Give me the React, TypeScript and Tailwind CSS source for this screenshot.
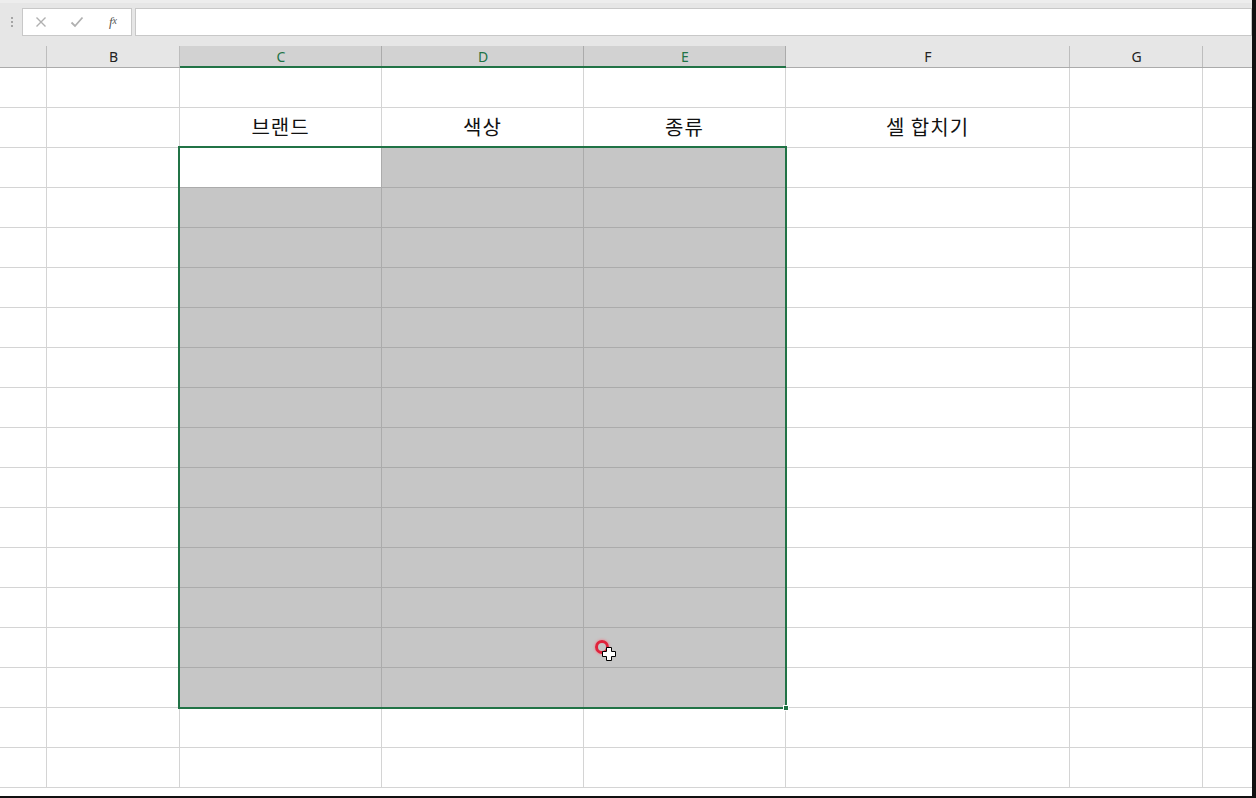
const cols = [
  { key: 'A', label: '', w: 'w-[47px]' },
  { key: 'B', label: 'B', w: 'w-[133px]' },
  { key: 'C', label: 'C', w: 'w-[202px]' },
  { key: 'D', label: 'D', w: 'w-[202px]' },
  { key: 'E', label: 'E', w: 'w-[202px]' },
  { key: 'F', label: 'F', w: 'w-[284px]' },
  { key: 'G', label: 'G', w: 'w-[133px]' },
  { key: 'H', label: '', w: 'flex-1' },
];

const titles: Record<string, string> = { C: '브랜드', D: '색상', E: '종류', F: '셀 합치기' };
const selCols = ['C', 'D', 'E'];

function FormulaBar() {
  return (
    <div className="h-[46px] bg-[#e6e6e6] flex items-start pt-[8px] relative">
      <div className="absolute top-0 left-0 right-0 h-[3px] bg-[#ededed]" />
      <div className="w-[22px] h-[27px] flex flex-col items-center justify-center gap-[2px] pl-[2px]">
        <span className="w-[2px] h-[2px] bg-[#a5a5a5]" />
        <span className="w-[2px] h-[2px] bg-[#a5a5a5]" />
        <span className="w-[2px] h-[2px] bg-[#a5a5a5]" />
      </div>
      <div className="w-[110px] h-[28px] bg-white border border-[#c8c8c8] flex items-center">
        <div className="w-[36px] flex justify-center">
          <svg width="12" height="12" viewBox="0 0 12 12" fill="none" stroke="#b0b0b0" strokeWidth="1.4">
            <path d="M1.5 1.5 L10.5 10.5 M10.5 1.5 L1.5 10.5" />
          </svg>
        </div>
        <div className="w-[36px] flex justify-center">
          <svg width="14" height="12" viewBox="0 0 14 12" fill="none" stroke="#b0b0b0" strokeWidth="1.8">
            <path d="M1.5 6.5 L5 10 L12.5 1.5" />
          </svg>
        </div>
        <div className="w-[36px] flex justify-center text-[13px] italic text-[#555] [font-family:'Liberation_Serif',serif]">
          f<span className="text-[10px] relative top-[1px]">x</span>
        </div>
      </div>
      <div className="ml-[3px] flex-1 h-[28px] bg-white border border-[#c8c8c8]" />
    </div>
  );
}

function HeaderRow() {
  return (
    <div className="flex h-[22px] bg-[#e6e6e6] border-b border-[#ababab] text-[14px] [font-family:'Noto_Sans',sans-serif]">
      {cols.map((c) => {
        const sel = selCols.includes(c.key);
        return (
          <div
            key={c.key}
            className={`${c.w} h-full flex items-center justify-center relative ${
              sel ? 'bg-[#d2d2d2] text-[#217346]' : 'text-[#222]'
            }`}
          >
            {c.label}
            {c.key !== 'H' && (
              <span className={`absolute right-0 top-0 bottom-0 w-px ${sel ? 'bg-[#ababab]' : 'bg-[#bdbdbd]'}`} />
            )}
            {sel && <span className="absolute left-0 right-0 -bottom-px h-[2px] bg-[#217346]" />}
          </div>
        );
      })}
    </div>
  );
}

function GridRow({ r }: { r: number }) {
  return (
    <div className="flex h-[40px]">
      {cols.map((c) => {
        const inSel = selCols.includes(c.key) && r >= 2 && r <= 15;
        const active = c.key === 'C' && r === 2;
        const gray = inSel && !active;
        return (
          <div
            key={c.key}
            className={`${c.w} h-full flex items-center justify-center border-b ${
              c.key !== 'H' ? 'border-r' : ''
            } ${gray ? 'bg-[#c6c6c6]' : 'bg-white'} ${
              inSel ? 'border-[#ababab]' : 'border-[#d4d4d4]'
            } text-[20px] text-[#111] tracking-[1px] [font-family:'Noto_Sans_CJK_KR','Noto_Sans',sans-serif]`}
          >
            {r === 1 && titles[c.key] ? <span className="relative top-[-1px]">{titles[c.key]}</span> : null}
          </div>
        );
      })}
    </div>
  );
}

export default function App() {
  const rows = Array.from({ length: 18 }, (_, i) => i);
  return (
    <div className="w-[1256px] h-[798px] overflow-hidden bg-white relative">
      <div className="mr-[4px] h-[796px] overflow-hidden relative">
        <FormulaBar />
        <HeaderRow />
        <div className="flex flex-col">
          {rows.map((r) => (
            <GridRow key={r} r={r} />
          ))}
        </div>
        {/* selection border */}
        <div className="absolute left-[178px] top-[146px] w-[609px] h-[563px] border-2 border-[#217346] pointer-events-none" />
        <div className="absolute left-[783px] top-[705px] w-[6px] h-[6px] bg-[#217346] border border-white" />
        {/* click indicator + cursor */}
        <div className="absolute left-[595px] top-[640px] w-[14px] h-[14px] rounded-full border-[3px] border-[#e0233c] shadow-[0_0_3px_#ff6b7d]" />
        <svg className="absolute left-[602px] top-[647px]" width="14" height="14" viewBox="0 0 14 14">
          <path d="M4.5 0.5 H9.5 V4.5 H13.5 V9.5 H9.5 V13.5 H4.5 V9.5 H0.5 V4.5 H4.5 Z" fill="#fff" stroke="#000" strokeWidth="1" />
        </svg>
      </div>
      <div className="absolute right-0 top-0 bottom-0 w-[4px] bg-[#111]" />
      <div className="absolute left-0 right-0 bottom-0 h-[2px] bg-[#111]" />
    </div>
  );
}
